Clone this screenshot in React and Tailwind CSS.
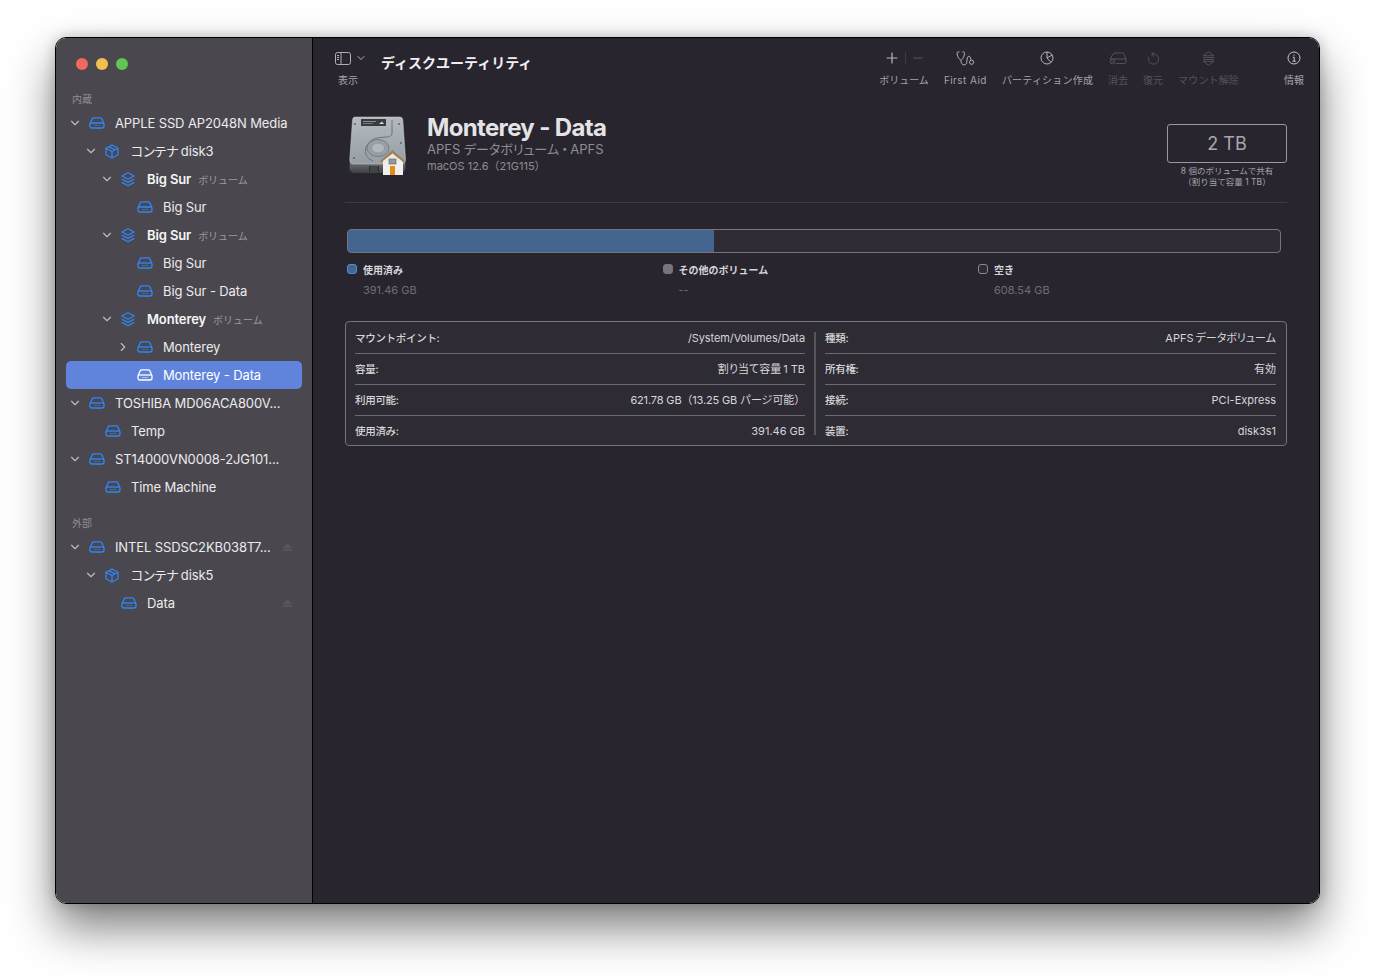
import React from "react";
import { ChevronDown, ChevronRight } from "lucide-react";

// Sidebar icons
const DiskIcon = ({ className }) => (
  <svg viewBox="0 0 16 12" className={`w-[16px] h-[12px] ${className}`} fill="none" stroke="currentColor" strokeWidth="1.3">
    <path d="M1 6.8 L3.2 1.8 Q3.6 0.9 4.6 0.9 H11.4 Q12.4 0.9 12.8 1.8 L15 6.8 V9 Q15 11 13 11 H3 Q1 11 1 9 Z" />
    <path d="M1 6 H15" />
    <path d="M5.5 8.6 H10.5" strokeWidth="1" strokeDasharray="1 1" />
  </svg>
);

const ContainerIcon = ({ className }) => (
  <svg viewBox="0 0 14 15" className={`w-[14px] h-[15px] ${className}`} fill="none" stroke="currentColor" strokeWidth="1.25" strokeLinejoin="round">
    <path d="M7 1 L13 4.2 V10.8 L7 14 L1 10.8 V4.2 Z" />
    <path d="M1 4.2 L7 7.5 L13 4.2 M7 7.5 V14 M4 2.6 L10 5.8" />
  </svg>
);

const LayersIcon = ({ className }) => (
  <svg viewBox="0 0 14 15" className={`w-[14px] h-[15px] ${className}`} fill="none" stroke="currentColor" strokeWidth="1.25" strokeLinejoin="round">
    <path d="M7 0.8 L13.2 4 L7 7.2 L0.8 4 Z" />
    <path d="M0.8 7.2 L7 10.4 L13.2 7.2" />
    <path d="M0.8 10.4 L7 13.8 L13.2 10.4" />
  </svg>
);

const EjectIcon = () => (
  <svg viewBox="0 0 10 9" className="w-[9px] h-[8px] text-[#59575d]" fill="currentColor">
    <path d="M5 0 L10 6 H0 Z" />
    <rect x="0" y="7" width="10" height="2" />
  </svg>
);

const BIG_ICONS = { disk: DiskIcon, box: ContainerIcon, layers: LayersIcon };

const sidebarInternal = [
  { level: 0, icon: "disk", name: "APPLE SSD AP2048N Media", open: true },
  { level: 1, icon: "box", name: "コンテナ\u2009disk3", open: true },
  { level: 2, icon: "layers", name: "Big Sur", sub: "ボリューム", open: true },
  { level: 3, icon: "disk", name: "Big Sur" },
  { level: 2, icon: "layers", name: "Big Sur", sub: "ボリューム", open: true },
  { level: 3, icon: "disk", name: "Big Sur" },
  { level: 3, icon: "disk", name: "Big Sur - Data" },
  { level: 2, icon: "layers", name: "Monterey", sub: "ボリューム", open: true },
  { level: 3, icon: "disk", name: "Monterey", closed: true },
  { level: 3, icon: "disk", name: "Monterey - Data", selected: true },
  { level: 0, icon: "disk", name: "TOSHIBA MD06ACA800V...", open: true },
  { level: 1, icon: "disk", name: "Temp" },
  { level: 0, icon: "disk", name: "ST14000VN0008-2JG101...", open: true },
  { level: 1, icon: "disk", name: "Time Machine" },
];

const sidebarExternal = [
  { level: 0, icon: "disk", name: "INTEL SSDSC2KB038T7...", open: true, eject: true },
  { level: 1, icon: "box", name: "コンテナ\u2009disk5", open: true },
  { level: 2, icon: "disk", name: "Data", eject: true },
];

const INDENT = ["pl-0", "pl-[16px]", "pl-[32px]", "pl-[48px]"];

const SidebarRow = ({ item }) => {
  const Icon = BIG_ICONS[item.icon];
  return (
    <div className={`relative flex items-center h-[28px] rounded-[5px] ${INDENT[item.level]} ${item.selected ? "bg-[#6084dc]" : ""}`}>
      <div className="w-[18px] flex justify-center text-[#bdbcbf]">
        {item.open && <ChevronDown size={14} strokeWidth={2} />}
        {item.closed && <ChevronRight size={14} strokeWidth={2} />}
      </div>
      <div className="w-[32px] pl-[5px] flex items-center">
        <Icon className={item.selected ? "text-white" : "text-[#2f87fa]"} />
      </div>
      <span
        className={`pt-[2px] text-[13px] tracking-[-0.12px] whitespace-nowrap -ml-[1px] [font-feature-settings:'palt'] ${
          item.sub ? "font-semibold text-[#f6f6f7]" : "text-[#ecebed]"
        } ${item.selected ? "text-white" : ""}`}
      >
        {item.name}
      </span>
      {item.sub && <span className="pt-[2px] ml-[7px] text-[10px] text-[#9b999e]">{item.sub}</span>}
      {item.eject && (
        <div className="absolute right-[10px] top-[10px]">
          <EjectIcon />
        </div>
      )}
    </div>
  );
};

// Toolbar icons
const PanelIcon = () => (
  <svg viewBox="0 0 16 13" className="w-[16px] h-[13px] text-[#b0afb3]" fill="none" stroke="currentColor" strokeWidth="1">
    <rect x="0.5" y="0.5" width="15" height="12" rx="2" />
    <path d="M6 0.5 V12.5" />
    <path d="M2 3.5 H4 M2 5.5 H4 M2 7.5 H4" />
  </svg>
);

const PlusMinus = () => (
  <div className="flex items-center gap-[7px]">
    <svg viewBox="0 0 12 12" className="w-[12px] h-[12px] text-[#b5b4b7]" fill="none" stroke="currentColor" strokeWidth="1.2">
      <path d="M6 0.5 V11.5 M0.5 6 H11.5" />
    </svg>
    <div className="w-px h-[12px] bg-[#3f3c44]" />
    <svg viewBox="0 0 12 12" className="w-[10px] h-[12px] text-[#5a585e]" fill="none" stroke="currentColor" strokeWidth="1.2">
      <path d="M0.5 6 H11.5" />
    </svg>
  </div>
);

const StethoscopeIcon = () => (
  <svg viewBox="0 0 20 16" className="w-[19px] h-[15px] text-[#b5b4b7]" fill="none" stroke="currentColor" strokeWidth="1.05">
    <path d="M3.5 1 H2 Q0.8 1 1 3 Q1.4 6 3 8 L5 10 L7 8 Q8.6 6 9 3 Q9.2 1 8 1 H6.5" />
    <path d="M5 10 Q5.5 14.8 8.5 14.8 Q11.5 14.8 11.5 10.5 Q11.5 5.5 13.5 5.5 Q15.3 5.5 16 9.5" />
    <circle cx="16.5" cy="12" r="2.2" />
  </svg>
);

const PartitionIcon = () => (
  <svg viewBox="0 0 14 14" className="w-[14px] h-[14px] text-[#b5b4b7]" fill="none" stroke="currentColor" strokeWidth="1">
    <circle cx="7" cy="7" r="6" />
    <path d="M7 1 V7 L12.2 4 M7 7 L11 11.5" />
  </svg>
);

const EraseIcon = () => (
  <svg viewBox="0 0 18 13" className="w-[18px] h-[13px] text-[#55535a]" fill="none" stroke="currentColor" strokeWidth="1">
    <path d="M1 7 L4 2 Q4.6 1 6 1 H13 Q14.5 1 15 2 L17 7 V10 Q17 11.5 15.5 11.5 H7" />
    <path d="M1.5 7 H17" />
    <circle cx="3.5" cy="9.5" r="2.4" />
    <path d="M2.5 8.5 L4.5 10.5 M4.5 8.5 L2.5 10.5" />
  </svg>
);

const RestoreIcon = () => (
  <svg viewBox="0 0 14 15" className="w-[13px] h-[15px] text-[#55535a]" fill="none" stroke="currentColor" strokeWidth="1">
    <path d="M5 3 A5.5 5.5 0 1 1 2 6" />
    <path d="M7.5 0.8 L4.8 3 L7.5 5.2" />
  </svg>
);

const UnmountIcon = () => (
  <svg viewBox="0 0 14 16" className="w-[13px] h-[15px] text-[#55535a]" fill="none" stroke="currentColor" strokeWidth="1">
    <path d="M7 0.8 L13 5 H1 Z" />
    <path d="M1 7 H13 M1 9 H13" />
    <path d="M7 15.2 L13 11 H1 Z" />
  </svg>
);

const InfoIcon = () => (
  <svg viewBox="0 0 14 14" className="w-[14px] h-[14px] text-[#c6c5c8]" fill="none" stroke="currentColor" strokeWidth="1">
    <circle cx="7" cy="7" r="6" />
    <path d="M5.8 6.2 H7.2 V10.2 M5.5 10.2 H8.8" />
    <circle cx="7" cy="4.1" r="0.7" fill="currentColor" stroke="none" />
  </svg>
);

const toolbarItems = [
  { label: "ボリューム", icon: <PlusMinus /> },
  { label: "First Aid", icon: <StethoscopeIcon />, tracking: "tracking-[0.45px]" },
  { label: "パーティション作成", icon: <PartitionIcon />, tracking: "tracking-[0.2px]" },
  { label: "消去", icon: <EraseIcon />, off: true },
  { label: "復元", icon: <RestoreIcon />, off: true },
  { label: "マウント解除", icon: <UnmountIcon />, off: true, tracking: "tracking-[0.15px]" },
];

const ToolbarItem = ({ label, icon, off, tracking = "" }) => (
  <div className="flex flex-col items-center">
    <div className="h-[18px] flex items-center justify-center">{icon}</div>
    <span className={`mt-[6px] text-[10px] leading-[14px] whitespace-nowrap ${tracking} ${off ? "text-[#55535a]" : "text-[#a5a3a8]"}`}>
      {label}
    </span>
  </div>
);

// Hard drive picture with the small house badge
const DriveArt = () => (
  <svg viewBox="0 0 60 62" className="w-[60px] h-[62px]">
    <defs>
      <linearGradient id="driveBody" x1="0" y1="0" x2="0" y2="1">
        <stop offset="0" stopColor="#b4bac0" />
        <stop offset="1" stopColor="#969da4" />
      </linearGradient>
      <linearGradient id="driveBase" x1="0" y1="0" x2="0" y2="1">
        <stop offset="0" stopColor="#7b7f84" />
        <stop offset="1" stopColor="#3e4043" />
      </linearGradient>
      <radialGradient id="platter">
        <stop offset="0" stopColor="#a9b0b7" />
        <stop offset="1" stopColor="#949ba2" />
      </radialGradient>
    </defs>
    <path d="M2 44 H57 L57.5 52 Q57.5 58 52 58 H7 Q1.5 58 1.5 52 Z" fill="url(#driveBase)" />
    <path d="M7 2 H52 Q54.5 2 54.8 5 L57.5 44 Q57.7 49 53 49 H6 Q1.5 49 1.8 44 L4.5 5 Q4.8 2 7 2 Z" fill="url(#driveBody)" stroke="#ccd1d6" strokeWidth="0.5" />
    <rect x="13" y="4" width="25" height="7" rx="0.5" fill="#3a3b3e" />
    <rect x="15" y="6" width="13" height="1" fill="#8a8b8e" />
    <rect x="15" y="8" width="10" height="1" fill="#77787b" />
    <path d="M31 9 L34 6.5 L36 9 Z" fill="#d8d8d8" />
    <path d="M44 5 V18 Q44 22 38 22 Q22 22 18 32 Q15 42 25 46" fill="none" stroke="#6d7379" strokeWidth="1" />
    <ellipse cx="30" cy="33" rx="11" ry="8.5" fill="url(#platter)" stroke="#70767c" strokeWidth="0.8" />
    <ellipse cx="30" cy="33" rx="6.5" ry="5" fill="#b0b7be" stroke="#7a8086" strokeWidth="0.5" />
    <circle cx="7" cy="9" r="1" fill="#5e6369" />
    <circle cx="51" cy="9" r="1" fill="#5e6369" />
    <circle cx="6" cy="43" r="1" fill="#5e6369" />
    <circle cx="53" cy="28" r="1" fill="#5e6369" />
    <path d="M21 51 H31 V57 H21 Z" fill="#2c2d2f" />
    <path d="M23 51 V57 M25 51 V57 M27 51 V57 M29 51 V57" stroke="#8a8c8f" strokeWidth="0.5" />
    <rect x="35" y="44" width="20" height="16" fill="#f1efeb" />
    <path d="M32 46 L44.5 35 L57 46 L55.5 47.5 L44.5 38.5 L33.5 47.5 Z" fill="#a27f54" />
    <path d="M35 46 L44.5 38.5 L54 46 Z" fill="#ece9e3" />
    <rect x="41" y="44" width="7" height="5" fill="#8d99a6" stroke="#7e6a52" strokeWidth="0.7" />
    <rect x="42" y="51" width="5" height="9" fill="#e08d1e" />
  </svg>
);

const legend = [
  { label: "使用済み", value: "391.46 GB", dot: "bg-[#44658f] border-[#4c8fe0]" },
  { label: "その他のボリューム", value: "--", dot: "bg-[#77757b] border-[#77757b]" },
  { label: "空き", value: "608.54 GB", dot: "bg-[#2f2b35] border-[#8b898e]" },
];

const PALT = "[font-feature-settings:'palt']";

const leftRows = [
  { label: "マウントポイント:", value: "/System/Volumes/Data", cls: "tracking-[-0.1px]" },
  { label: "容量:", value: "割り当て容量\u20091 TB", cls: PALT },
  { label: "利用可能:", value: "621.78 GB（13.25 GB パージ可能）", cls: "tracking-[-0.15px]" },
  { label: "使用済み:", value: "391.46 GB", cls: "" },
];

const rightRows = [
  { label: "種類:", value: "APFS\u2009データボリューム", cls: PALT },
  { label: "所有権:", value: "有効", cls: "text-[10px]" },
  { label: "接続:", value: "PCI-Express", cls: "" },
  { label: "装置:", value: "disk3s1", cls: "" },
];

const InfoColumn = ({ rows, width }) => (
  <div className={`flex flex-col ${width}`}>
    {rows.map(({ label, value, cls }, i) => (
      <div
        key={label}
        className={`flex items-center justify-between text-[#d6d5d8] ${
          i === 0 ? "h-[32px] pt-[2px] border-b border-[#6b696f]" : i === 3 ? "h-[29px] pt-[2px]" : "h-[31px] pt-px border-b border-[#6b696f]"
        }`}
      >
        <span className="text-[10.5px] tracking-[-0.3px] font-medium">{label}</span>
        <span className={`text-[11px] ${cls}`}>{value}</span>
      </div>
    ))}
  </div>
);

export default function App() {
  return (
    <div className="w-full h-[977px] bg-white overflow-hidden pl-[55px] pt-[37px] font-['Inter','Noto_Sans_CJK_JP',sans-serif] antialiased">
      <div className="w-[1265px] h-[867px] flex rounded-[11px] overflow-hidden border border-black shadow-[0_24px_46px_rgba(0,0,0,0.5),0_0_14px_rgba(0,0,0,0.22)]">
        {/* Sidebar */}
        <aside className="w-[256px] shrink-0 bg-[#4a484e] px-[10px] pt-[20px]">
          <div className="flex gap-[8px] pl-[10px]">
            <div className="w-[12px] h-[12px] rounded-full bg-[#ec6a5e]" />
            <div className="w-[12px] h-[12px] rounded-full bg-[#f4bf4f]" />
            <div className="w-[12px] h-[12px] rounded-full bg-[#61c554]" />
          </div>
          <p className="mt-[22px] mb-[3px] pl-[6px] text-[10px] leading-[14px] text-[#8f8d92]">内蔵</p>
          {sidebarInternal.map((item, i) => (
            <SidebarRow key={i} item={item} />
          ))}
          <p className="mt-[15px] mb-[3px] pl-[6px] text-[10px] leading-[14px] text-[#8f8d92]">外部</p>
          {sidebarExternal.map((item, i) => (
            <SidebarRow key={i} item={item} />
          ))}
        </aside>

        {/* Main */}
        <main className="flex-1 min-w-0 bg-[#29252f] border-l border-black">
          {/* Toolbar */}
          <div className="h-[72px] flex items-start pt-[11px] pl-[22px] pr-[15px]">
            <div className="flex flex-col">
              <div className="h-[18px] flex items-center gap-[4px]">
                <PanelIcon />
                <ChevronDown size={12} strokeWidth={2} className="text-[#b0afb3]" />
              </div>
              <span className="mt-[6px] pl-[3px] text-[10px] leading-[14px] text-[#a5a3a8]">表示</span>
            </div>
            <h1 className="ml-[14px] mt-[4px] text-[14px] leading-[20px] font-semibold text-[#f0eff1]">ディスクユーティリティ</h1>
            <div className="ml-auto flex gap-[15px]">
              {toolbarItems.map((item) => (
                <ToolbarItem key={item.label} {...item} />
              ))}
              <div className="ml-[30px]">
                <ToolbarItem label="情報" icon={<InfoIcon />} />
              </div>
            </div>
          </div>

          <div className="px-[32px]">
            {/* Volume header */}
            <div className="h-[93px] flex items-start border-b border-[#3e3a44]">
              <div className="mt-[5px] ml-[3px]">
                <DriveArt />
              </div>
              <div className="ml-[19px] pt-[4px]">
                <h2 className="text-[24px] leading-[28px] font-bold text-[#e4e3e5] tracking-[-0.65px]">Monterey - Data</h2>
                <p className={`text-[13px] leading-[14px] text-[#8f8d92] ${PALT}`}>APFS データボリューム{"\u2009・\u2009"}APFS</p>
                <p className="mt-[3px] text-[11px] leading-[14px] text-[#8f8d92]">macOS 12.6（21G115）</p>
              </div>
              <div className="ml-auto mt-[14px] w-[120px]">
                <div className="h-[39px] flex items-center justify-center rounded-[3px] border border-[#9a989d] text-[18px] text-[#a9a7ac]">2 TB</div>
                <p className="mt-[3px] text-center text-[8.5px] leading-[11px] text-[#a5a3a8]">
                  8 個のボリュームで共有
                  <br />
                  （割り当て容量 1 TB）
                </p>
              </div>
            </div>

            {/* Usage bar */}
            <div className="mt-[26px] ml-[2px] mr-[6px] h-[24px] flex rounded-[4px] bg-[#2f2b35] border border-[#77757b] overflow-hidden">
              <div className="w-[367px] -m-px bg-[#44658f] border border-[#4c8fe0] border-r-0 rounded-l-[4px]" />
            </div>

            {/* Legend */}
            <div className="mt-[10px] ml-[2px] grid grid-cols-[315.5px_315.5px_1fr]">
              {legend.map((l) => (
                <div key={l.label}>
                  <div className="flex items-center gap-[6px]">
                    <div className={`w-[10px] h-[10px] -mt-[2px] rounded-[3px] border ${l.dot}`} />
                    <span className="text-[10px] leading-[14px] font-semibold text-[#d6d5d8]">{l.label}</span>
                  </div>
                  <p className="mt-[6px] pl-[16px] text-[11px] leading-[14px] text-[#6f6d73]">{l.value}</p>
                </div>
              ))}
            </div>

            {/* Details table */}
            <div className="mt-[24px] h-[125px] flex rounded-[4px] border border-[#77757b] bg-[#2f2b35] pl-[9px] pr-[10px]">
              <InfoColumn rows={leftRows} width="w-[450px]" />
              <div className="mx-[9px] w-[2px] h-[103px] self-center bg-[#57555a]" />
              <InfoColumn rows={rightRows} width="w-[451px]" />
            </div>
          </div>
        </main>
      </div>
    </div>
  );
}
